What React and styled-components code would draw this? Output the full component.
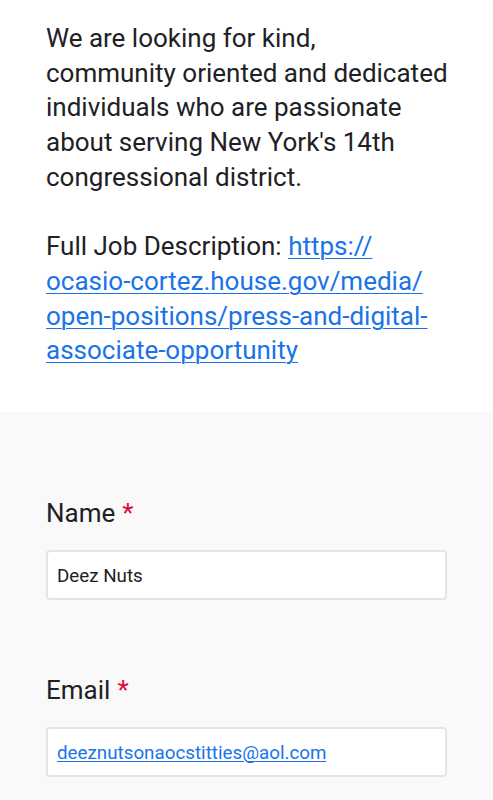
import React from "react";
import styled, { createGlobalStyle } from "styled-components";

const Global = createGlobalStyle`
  html, body {
    margin: 0;
    padding: 0;
    background: #f9f9f9;
  }
  body {
    font-family: Roboto, "Noto Sans", Arial, sans-serif;
    color: #202124;
    -webkit-font-smoothing: antialiased;
  }
`;

const Page = styled.div`
  display: flex;
  flex-direction: column;
  min-height: 800px;
`;

const Intro = styled.section`
  background: #ffffff;
  padding: 21px 42px 44px 46px;
`;

const Para = styled.p`
  margin: 0;
  font-size: 26px;
  line-height: 34.7px;
  color: #202124;
  & + & {
    margin-top: 34.7px;
  }
`;

const Link = styled.a`
  color: #1a73e8;
  text-decoration: underline;
  text-decoration-thickness: 1px;
  text-underline-offset: 3px;
`;

const FormSection = styled.section`
  flex: 1;
  background: #f9f9f9;
  padding: 84px 46px 40px 46px;
  display: flex;
  flex-direction: column;
  gap: 73px;
`;

const Field = styled.div`
  display: flex;
  flex-direction: column;
  gap: 20px;
`;

const Label = styled.label`
  font-size: 26px;
  line-height: 34px;
  color: #202124;
`;

const Required = styled.span`
  color: #e0063c;
  margin-left: 7px;
`;

const InputBox = styled.div`
  box-sizing: border-box;
  height: 50px;
  width: 401px;
  background: #ffffff;
  border: 2px solid #e4e4e4;
  border-radius: 4px;
  display: flex;
  align-items: center;
  padding: 1px 9px 0;
  font-size: 18.8px;
  color: #202124;
`;

const InputLink = styled.a`
  color: #1a73e8;
  text-decoration: underline;
  text-decoration-thickness: 1px;
  text-underline-offset: 2px;
`;

export default function App() {
  return (
    <Page>
      <Global />
      <Intro>
        <Para>
          We are looking for kind, community oriented and dedicated
          individuals who are passionate about serving New York's 14th
          congressional district.
        </Para>
        <Para>
          Full Job Description:{" "}
          <Link href="#">
            https://
            <br />
            ocasio-cortez.house.gov/media/
            <br />
            open-positions/press-and-digital-
            <br />
            associate-opportunity
          </Link>
        </Para>
      </Intro>
      <FormSection>
        <Field>
          <Label>
            Name<Required>*</Required>
          </Label>
          <InputBox>Deez Nuts</InputBox>
        </Field>
        <Field>
          <Label>
            Email<Required>*</Required>
          </Label>
          <InputBox>
            <InputLink href="#">deeznutsonaocstitties@aol.com</InputLink>
          </InputBox>
        </Field>
      </FormSection>
    </Page>
  );
}
